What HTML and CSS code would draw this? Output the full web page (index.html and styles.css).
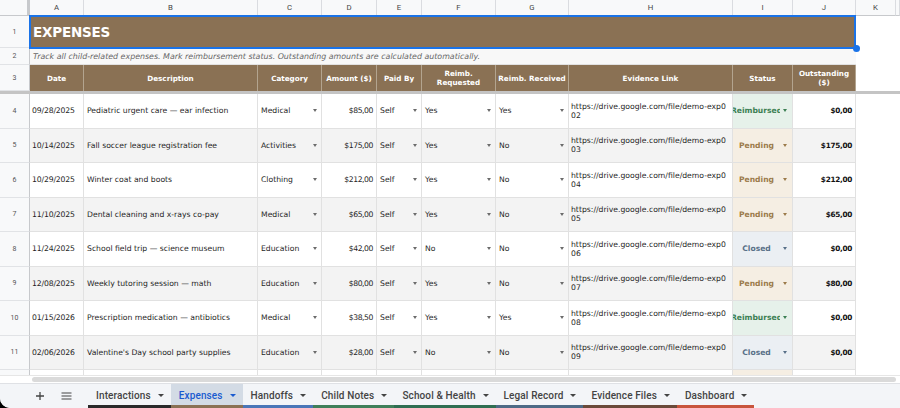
FILE: index.html
```html
<!DOCTYPE html>
<html lang="en">
<head>
<meta charset="utf-8">
<title>Expenses</title>
<link rel="stylesheet" href="styles.css">
</head>
<body>
<div class="app">
  <div class="sheet">
    <div class="row colhdr">
      <div class="corner"></div>
      <div class="ch">A</div><div class="ch">B</div><div class="ch">C</div><div class="ch">D</div><div class="ch">E</div><div class="ch">F</div><div class="ch">G</div><div class="ch">H</div><div class="ch">I</div><div class="ch">J</div><div class="ch">K</div><div class="ch"></div>
    </div>

    <div class="row r-title">
      <div class="rh">1</div>
      <div class="title">EXPENSES<span class="handle"></span></div>
      <div class="e"></div><div class="e"></div>
    </div>

    <div class="row r-note">
      <div class="rh">2</div>
      <div class="note">Track all child-related expenses. Mark reimbursement status. Outstanding amounts are calculated automatically.</div>
      <div class="e"></div><div class="e"></div>
    </div>

    <div class="row r-head">
      <div class="rh">3</div>
      <div class="h">Date</div>
      <div class="h">Description</div>
      <div class="h">Category</div>
      <div class="h">Amount ($)</div>
      <div class="h">Paid By</div>
      <div class="h">Reimb.<br>Requested</div>
      <div class="h">Reimb. Received</div>
      <div class="h">Evidence Link</div>
      <div class="h">Status</div>
      <div class="h">Outstanding<br>($)</div>
      <div class="e"></div><div class="e"></div>
    </div>

    <div class="row data">
      <div class="rh">4</div>
      <div class="c date">09/28/2025</div>
      <div class="c">Pediatric urgent care — ear infection</div>
      <div class="c dd">Medical<i class="arr"></i></div>
      <div class="c num">$85,00</div>
      <div class="c dd">Self<i class="arr"></i></div>
      <div class="c dd">Yes<i class="arr"></i></div>
      <div class="c dd">Yes<i class="arr"></i></div>
      <div class="c link">https://drive.google.com/file/demo-exp002</div>
      <div class="c st reimb"><span class="txt">Reimbursed</span><i class="arr"></i></div>
      <div class="c out">$0,00</div>
      <div class="e"></div><div class="e"></div>
    </div>

    <div class="row data alt">
      <div class="rh">5</div>
      <div class="c date">10/14/2025</div>
      <div class="c">Fall soccer league registration fee</div>
      <div class="c dd">Activities<i class="arr"></i></div>
      <div class="c num">$175,00</div>
      <div class="c dd">Self<i class="arr"></i></div>
      <div class="c dd">Yes<i class="arr"></i></div>
      <div class="c dd">No<i class="arr"></i></div>
      <div class="c link">https://drive.google.com/file/demo-exp003</div>
      <div class="c st pend"><span class="txt">Pending</span><i class="arr"></i></div>
      <div class="c out">$175,00</div>
      <div class="e"></div><div class="e"></div>
    </div>

    <div class="row data">
      <div class="rh">6</div>
      <div class="c date">10/29/2025</div>
      <div class="c">Winter coat and boots</div>
      <div class="c dd">Clothing<i class="arr"></i></div>
      <div class="c num">$212,00</div>
      <div class="c dd">Self<i class="arr"></i></div>
      <div class="c dd">Yes<i class="arr"></i></div>
      <div class="c dd">No<i class="arr"></i></div>
      <div class="c link">https://drive.google.com/file/demo-exp004</div>
      <div class="c st pend"><span class="txt">Pending</span><i class="arr"></i></div>
      <div class="c out">$212,00</div>
      <div class="e"></div><div class="e"></div>
    </div>

    <div class="row data alt">
      <div class="rh">7</div>
      <div class="c date">11/10/2025</div>
      <div class="c">Dental cleaning and x-rays co-pay</div>
      <div class="c dd">Medical<i class="arr"></i></div>
      <div class="c num">$65,00</div>
      <div class="c dd">Self<i class="arr"></i></div>
      <div class="c dd">Yes<i class="arr"></i></div>
      <div class="c dd">No<i class="arr"></i></div>
      <div class="c link">https://drive.google.com/file/demo-exp005</div>
      <div class="c st pend"><span class="txt">Pending</span><i class="arr"></i></div>
      <div class="c out">$65,00</div>
      <div class="e"></div><div class="e"></div>
    </div>

    <div class="row data">
      <div class="rh">8</div>
      <div class="c date">11/24/2025</div>
      <div class="c">School field trip — science museum</div>
      <div class="c dd">Education<i class="arr"></i></div>
      <div class="c num">$42,00</div>
      <div class="c dd">Self<i class="arr"></i></div>
      <div class="c dd">No<i class="arr"></i></div>
      <div class="c dd">No<i class="arr"></i></div>
      <div class="c link">https://drive.google.com/file/demo-exp006</div>
      <div class="c st closed"><span class="txt">Closed</span><i class="arr"></i></div>
      <div class="c out">$0,00</div>
      <div class="e"></div><div class="e"></div>
    </div>

    <div class="row data alt">
      <div class="rh">9</div>
      <div class="c date">12/08/2025</div>
      <div class="c">Weekly tutoring session — math</div>
      <div class="c dd">Education<i class="arr"></i></div>
      <div class="c num">$80,00</div>
      <div class="c dd">Self<i class="arr"></i></div>
      <div class="c dd">Yes<i class="arr"></i></div>
      <div class="c dd">No<i class="arr"></i></div>
      <div class="c link">https://drive.google.com/file/demo-exp007</div>
      <div class="c st pend"><span class="txt">Pending</span><i class="arr"></i></div>
      <div class="c out">$80,00</div>
      <div class="e"></div><div class="e"></div>
    </div>

    <div class="row data">
      <div class="rh">10</div>
      <div class="c date">01/15/2026</div>
      <div class="c">Prescription medication — antibiotics</div>
      <div class="c dd">Medical<i class="arr"></i></div>
      <div class="c num">$38,50</div>
      <div class="c dd">Self<i class="arr"></i></div>
      <div class="c dd">Yes<i class="arr"></i></div>
      <div class="c dd">Yes<i class="arr"></i></div>
      <div class="c link">https://drive.google.com/file/demo-exp008</div>
      <div class="c st reimb"><span class="txt">Reimbursed</span><i class="arr"></i></div>
      <div class="c out">$0,00</div>
      <div class="e"></div><div class="e"></div>
    </div>

    <div class="row data alt">
      <div class="rh">11</div>
      <div class="c date">02/06/2026</div>
      <div class="c">Valentine's Day school party supplies</div>
      <div class="c dd">Education<i class="arr"></i></div>
      <div class="c num">$28,00</div>
      <div class="c dd">Self<i class="arr"></i></div>
      <div class="c dd">No<i class="arr"></i></div>
      <div class="c dd">No<i class="arr"></i></div>
      <div class="c link">https://drive.google.com/file/demo-exp009</div>
      <div class="c st closed"><span class="txt">Closed</span><i class="arr"></i></div>
      <div class="c out">$0,00</div>
      <div class="e"></div><div class="e"></div>
    </div>

    <div class="row data">
      <div class="rh"></div>
      <div class="c"></div><div class="c"></div><div class="c"></div><div class="c"></div><div class="c"></div><div class="c"></div><div class="c"></div><div class="c"></div><div class="c st pend"></div><div class="c"></div>
      <div class="e"></div><div class="e"></div>
    </div>
  </div>

  <div class="hscroll"><div class="thumb"></div></div>

  <div class="tabs">
    <div class="tools">
      <svg class="ico" width="10" height="10" viewBox="0 0 10 10"><path d="M5 1v8M1 5h8" stroke="#444" stroke-width="1.3" fill="none"/></svg>
      <svg class="ico" width="11" height="10" viewBox="0 0 11 10"><path d="M0.5 2h10M0.5 5h10M0.5 8h10" stroke="#444" stroke-width="1.2" fill="none"/></svg>
    </div>
    <div class="tab t-int">Interactions<i class="tarr"></i></div>
    <div class="tab t-exp active">Expenses<i class="tarr"></i></div>
    <div class="tab t-hand">Handoffs<i class="tarr"></i></div>
    <div class="tab t-child">Child Notes<i class="tarr"></i></div>
    <div class="tab t-school">School &amp; Health<i class="tarr"></i></div>
    <div class="tab t-legal">Legal Record<i class="tarr"></i></div>
    <div class="tab t-evid">Evidence Files<i class="tarr"></i></div>
    <div class="tab t-dash">Dashboard<i class="tarr"></i></div>
  </div>
</div>
</body>
</html>
```

FILE: styles.css
```css
* { box-sizing: border-box; margin: 0; padding: 0; }

html, body {
  width: 900px;
  height: 408px;
  overflow: hidden;
  background: #000;
}

body {
  font-family: "DejaVu Sans", "Liberation Sans", sans-serif;
  color: #1f1f1f;
}

.app {
  width: 900px;
  height: 408px;
  background: #fff;
  border-bottom-left-radius: 10px;
  overflow: hidden;
  display: flex;
  flex-direction: column;
}

.sheet {
  height: 375px;
  flex: none;
  display: flex;
  flex-direction: column;
  overflow: hidden;
}

.row {
  flex: none;
  display: grid;
  grid-template-columns: 30px 54px 174px 64px 55px 45px 74px 73px 164px 60px 63px 40px 1fr;
}

/* column header */
.colhdr { height: 16px; background: #f8f9fa; }
.corner {
  background: #f8f9fa;
  border-right: 3px solid #c7c9cc;
  border-bottom: 1px solid #c7c9cc;
}
.ch {
  font-family: Roboto, "Liberation Sans", sans-serif;
  font-size: 7.8px;
  color: #444;
  display: flex;
  align-items: center;
  justify-content: center;
  border-right: 1px solid #dadce0;
  border-bottom: 1px solid #c7c9cc;
}

/* row header */
.rh {
  background: #f8f9fa;
  font-family: Roboto, "Liberation Sans", sans-serif;
  font-size: 7px;
  color: #555;
  display: flex;
  align-items: center;
  justify-content: center;
  border-right: 1px solid #c7c9cc;
  border-bottom: 1px solid #e1e3e6;
}

.e { background: #fff; }

/* title row */
.r-title { height: 32px; }
.title {
  grid-column: span 10;
  position: relative;
  background: #8a7154;
  color: #fff;
  font-weight: bold;
  font-size: 13.5px;
  letter-spacing: -0.2px;
  display: flex;
  align-items: center;
  padding-left: 3px;
}
.title::after {
  content: "";
  position: absolute;
  top: -1px;
  left: -1px;
  right: 0;
  bottom: -1px;
  border: 2px solid #1a73e8;
  pointer-events: none;
}
.handle {
  position: absolute;
  right: -4px;
  bottom: -4px;
  width: 7px;
  height: 7px;
  border-radius: 50%;
  background: #1a73e8;
  z-index: 2;
}

/* note row */
.r-note { height: 17px; }
.note {
  grid-column: span 10;
  background: #f8f8f8;
  font-style: italic;
  font-size: 7.9px;
  color: #666;
  display: flex;
  align-items: center;
  padding-left: 3px;
  border-bottom: 1px solid #e1e1e1;
  white-space: nowrap;
  overflow: hidden;
}

/* header row */
.r-head {
  height: 29px;
  border-bottom: 3px solid #c4c4c4;
}
.h {
  background: #8a7154;
  color: #fff;
  font-weight: bold;
  font-size: 7.2px;
  line-height: 9px;
  text-align: center;
  display: flex;
  align-items: center;
  justify-content: center;
  border-right: 1px solid #b3a48f;
  white-space: nowrap;
}

/* data rows */
.data { height: 34.5px; }
.c {
  background: #fff;
  font-size: 7.7px;
  color: #1f1f1f;
  display: flex;
  align-items: center;
  padding: 0 3px;
  border-right: 1px solid #e1e1e1;
  border-bottom: 1px solid #e1e1e1;
  white-space: nowrap;
  overflow: hidden;
}
.alt .c { background: #f3f3f3; }

.date { letter-spacing: -0.15px; padding-left: 2px; }

.num {
  justify-content: flex-end;
  letter-spacing: -0.45px;
  padding-right: 3px;
}

.out {
  justify-content: flex-end;
  font-weight: bold;
  font-size: 7.3px;
  letter-spacing: -0.3px;
  color: #111;
  padding-right: 3px;
}

.link {
  white-space: normal;
  word-break: break-all;
  line-height: 9px;
  padding: 0 4px 0 2px;
}

.arr {
  flex: none;
  width: 0;
  height: 0;
  margin-left: auto;
  margin-right: 4px;
  border-left: 2.5px solid transparent;
  border-right: 2.5px solid transparent;
  border-top: 3px solid #6b6b6b;
}
.dd { padding-right: 0; }

.st {
  padding: 0;
  font-weight: bold;
  font-size: 7.6px;
}
.st .txt {
  flex: 1;
  min-width: 0;
  display: flex;
  justify-content: center;
  overflow: hidden;
}
.st .arr { margin-left: 3px; margin-right: 5px; }

.st.reimb, .alt .st.reimb { background: #e6f1ea; color: #3c7f53; }
.st.reimb .arr { border-top-color: #3c7f53; }
.st.pend, .alt .st.pend { background: #f5eee3; color: #9b7a4a; }
.st.pend .arr { border-top-color: #9b7a4a; }
.st.closed, .alt .st.closed { background: #ebeff3; color: #587088; }
.st.closed .arr { border-top-color: #587088; }

/* horizontal scrollbar */
.hscroll {
  height: 8px;
  flex: none;
  background: #fff;
  border-top: 1px solid #e6e6e6;
  padding: 1px 4px 1px 32px;
}
.thumb {
  height: 100%;
  background: #dadada;
  border-radius: 3px;
}

/* sheet tabs */
.tabs {
  height: 25px;
  flex: none;
  display: flex;
  background: #f3f5f8;
  border-top: 1px solid #dfe1e5;
  font-family: Roboto, "Liberation Sans", sans-serif;
  font-size: 10px;
  font-weight: 500;
  letter-spacing: 0.12px;
  color: #444;
}
.tools {
  width: 88px;
  display: flex;
  align-items: center;
  padding-left: 35px;
  gap: 16px;
}
.ico { display: block; flex: none; }

.tab {
  display: flex;
  align-items: center;
  gap: 7px;
  padding: 2px 7px 0 8px;
  border-bottom: 3px solid transparent;
  white-space: nowrap;
}
.tarr {
  width: 0;
  height: 0;
  border-left: 3px solid transparent;
  border-right: 3px solid transparent;
  border-top: 3px solid #444;
}
.tab.active {
  background: #d3dbe5;
  color: #1a5bd0;
}
.tab.active .tarr { border-top-color: #1a5bd0; }

.t-int { border-bottom-color: #2a2a2a; }
.t-exp { border-bottom-color: #8a7154; }
.t-hand { border-bottom-color: #4a76b8; }
.t-child { border-bottom-color: #3f7f5a; }
.t-school { border-bottom-color: #2f6e52; }
.t-legal { border-bottom-color: #4d6a86; }
.t-evid { border-bottom-color: #6a4a3a; }
.t-dash { border-bottom-color: #c8553d; }
```
